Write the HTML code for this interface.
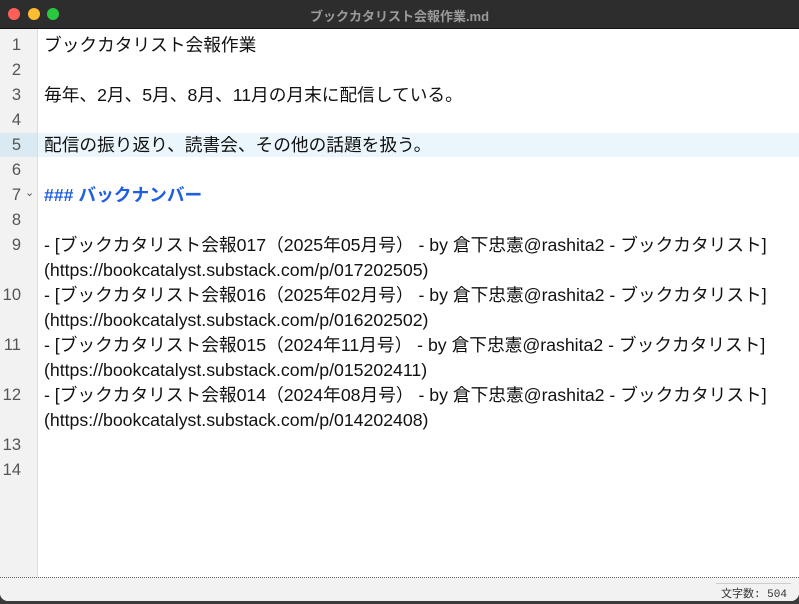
<!DOCTYPE html>
<html><head><meta charset="utf-8"><style>
body{margin:0;width:799px;height:604px;overflow:hidden;background:#3a3a3a;font-family:"Liberation Sans","Noto Sans CJK JP",sans-serif;}
.win{position:absolute;left:0;top:0;width:799px;height:601px;background:#fff;border-radius:0 0 8px 8px;overflow:hidden}
.tb{position:absolute;left:0;top:0;width:799px;height:28px;background:#2d2d2d;border-bottom:1px solid #111}
.tb .t{position:absolute;left:0;right:0;top:6px;text-align:center;color:#9a9a9a;font-size:13px;font-weight:bold}
.dot{position:absolute;top:8px;width:12px;height:12px;border-radius:50%}
.gut{position:absolute;left:0;top:29px;width:37px;height:548px;background:#f2f2f2;border-right:1px solid #ddd}
.ln{position:absolute;left:0;width:21px;text-align:right;color:#555;font-size:16.5px;line-height:25px}
.tx{position:absolute;left:44px;color:#111;font-size:17.7px;white-space:nowrap;line-height:25px}
.hl{position:absolute;left:0;top:133px;width:799px;height:24px;background:#eaf6fc}
.hlg{position:absolute;left:0;top:133px;width:37px;height:24px;background:#dbe9f3}
.sb{position:absolute;left:0;top:577px;width:799px;height:24px;background:#f2f2f2;border-top:1px dotted #666}
.sb .line{position:absolute;left:716px;right:8px;top:5px;border-top:1px solid #ccc}
.sb .c{position:absolute;right:12px;top:7px;font-size:11px;color:#333;font-family:"Liberation Mono","Noto Sans CJK JP",monospace}
</style></head><body><div class="win">
<div class="tb"><div class="dot" style="left:8px;background:#fe5f57"></div><div class="dot" style="left:28px;background:#febc2e"></div><div class="dot" style="left:47px;background:#28c840"></div><div class="t">ブックカタリスト会報作業.md</div></div>
<div class="hl"></div>
<div class="gut"></div><div class="hlg"></div>
<div class="ln" style="top:33px">1</div><div class="ln" style="top:58px">2</div><div class="ln" style="top:83px">3</div><div class="ln" style="top:108px">4</div><div class="ln" style="top:133px">5</div><div class="ln" style="top:158px">6</div><div class="ln" style="top:183px">7</div><div style="position:absolute;left:25px;top:186px;font-size:11px;color:#555">⌄</div><div class="ln" style="top:208px">8</div><div class="ln" style="top:233px">9</div><div class="ln" style="top:283px">10</div><div class="ln" style="top:333px">11</div><div class="ln" style="top:383px">12</div><div class="ln" style="top:433px">13</div><div class="ln" style="top:458px">14</div>
<div class="tx" style="top:33px">ブックカタリスト会報作業</div>
<div class="tx" style="top:83px">毎年、2月、5月、8月、11月の月末に配信している。</div>
<div class="tx" style="top:133px">配信の振り返り、読書会、その他の話題を扱う。</div>
<div class="tx" style="top:183px;color:#1f5fe0;font-weight:bold">### バックナンバー</div>
<div class="tx" style="top:233px">- [ブックカタリスト会報017（2025年05月号） - by 倉下忠憲@rashita2 - ブックカタリスト]</div>
<div class="tx" style="top:258px">(https://bookcatalyst.substack.com/p/017202505)</div>
<div class="tx" style="top:283px">- [ブックカタリスト会報016（2025年02月号） - by 倉下忠憲@rashita2 - ブックカタリスト]</div>
<div class="tx" style="top:308px">(https://bookcatalyst.substack.com/p/016202502)</div>
<div class="tx" style="top:333px">- [ブックカタリスト会報015（2024年11月号） - by 倉下忠憲@rashita2 - ブックカタリスト]</div>
<div class="tx" style="top:358px">(https://bookcatalyst.substack.com/p/015202411)</div>
<div class="tx" style="top:383px">- [ブックカタリスト会報014（2024年08月号） - by 倉下忠憲@rashita2 - ブックカタリスト]</div>
<div class="tx" style="top:408px">(https://bookcatalyst.substack.com/p/014202408)</div>
<div class="sb"><div class="line"></div><div class="c">文字数: 504</div></div>
</div></body></html>
